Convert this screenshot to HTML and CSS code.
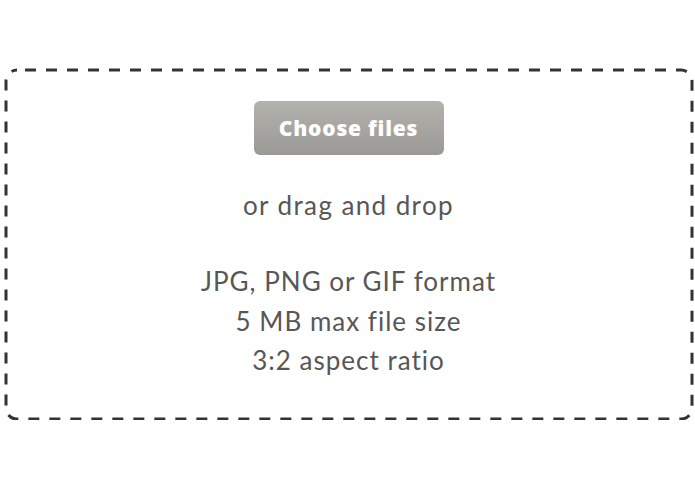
FILE: index.html
```html
<!DOCTYPE html>
<html>
<head>
<meta charset="utf-8">
<link rel="stylesheet" href="styles.css">
</head>
<body>
<div class="dropzone">
  <svg class="outline" aria-hidden="true"><rect width="100%" height="100%" rx="11" ry="11"></rect></svg>
  <button class="choose">Choose files</button>
  <p class="drag">or drag and drop</p>
  <ul class="rules">
    <li>JPG, PNG or GIF format</li>
    <li>5 MB max file size</li>
    <li>3:2 aspect ratio</li>
  </ul>
</div>
</body>
</html>
```
FILE: styles.css
```css
html, body {
  margin: 0;
  padding: 0;
  background: #ffffff;
}
body {
  padding: 68px 2px 0 4px;
  font-family: Lato, sans-serif;
}
.dropzone {
  position: relative;
  box-sizing: border-box;
  height: 352px;
  display: flex;
  flex-direction: column;
  align-items: center;
  padding-top: 33px;
}
.outline {
  position: absolute;
  top: 1.5px;
  left: 1.5px;
  width: calc(100% - 3px);
  height: calc(100% - 3px);
  overflow: visible;
  pointer-events: none;
}
.outline rect {
  fill: none;
  stroke: #333333;
  stroke-width: 3;
  stroke-dasharray: 11 10;
  stroke-dashoffset: -8;
}
.choose {
  width: 190px;
  height: 54px;
  border: none;
  border-radius: 6px;
  background: linear-gradient(#b4b2ad, #9b9995);
  color: #ffffff;
  font-family: "Open Sans", Lato, sans-serif;
  font-weight: 800;
  font-size: 21px;
  letter-spacing: 0.8px;
  padding: 0;
}
.drag {
  margin: 34px 0 0 0;
  font-size: 26px;
  line-height: 32px;
  letter-spacing: 1.4px;
  color: #575757;
}
.rules {
  list-style: none;
  margin: 41px 0 0 0;
  padding: 0;
  text-align: center;
  font-size: 26px;
  line-height: 39.5px;
  letter-spacing: 1px;
  color: #575757;
}
```
